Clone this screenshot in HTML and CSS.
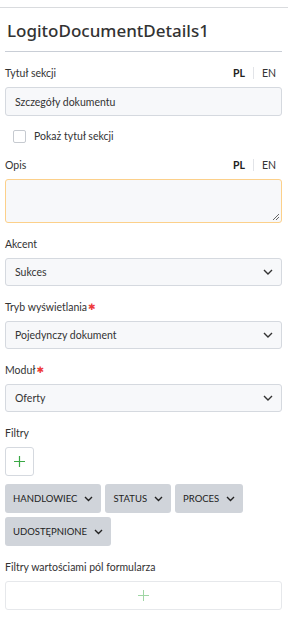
FILE: index.html
```html
<!DOCTYPE html>
<html lang="pl">
<head>
<meta charset="utf-8">
<link rel="stylesheet" href="styles.css">
</head>
<body>
<div class="topline"></div>
<div class="panel">
  <h1 class="title">LogitoDocumentDetails1</h1>
  <div class="field">
    <div class="label-row"><span class="label">Tytuł sekcji</span><span class="langs"><b>PL</b><i class="sep"></i><span>EN</span></span></div>
    <div class="input">Szczegóły dokumentu</div>
  </div>
  <label class="check"><span class="box"></span>Pokaż tytuł sekcji</label>
  <div class="field">
    <div class="label-row"><span class="label">Opis</span><span class="langs"><b>PL</b><i class="sep"></i><span>EN</span></span></div>
    <div class="textarea"><svg class="grip" width="8" height="8" viewBox="0 0 8 8"><path d="M7 1 L1 7 M7 4 L4 7" stroke="#555" stroke-width="0.9"/></svg></div>
  </div>
  <div class="field">
    <div class="label-row"><span class="label">Akcent</span></div>
    <div class="input select">Sukces<svg class="chev" width="10" height="6" viewBox="0 0 10 6"><path d="M1 1 L5 5 L9 1" fill="none" stroke="#333" stroke-width="1.4"/></svg></div>
  </div>
  <div class="field">
    <div class="label-row"><span class="label">Tryb wyświetlania<span class="req">✱</span></span></div>
    <div class="input select">Pojedynczy dokument<svg class="chev" width="10" height="6" viewBox="0 0 10 6"><path d="M1 1 L5 5 L9 1" fill="none" stroke="#333" stroke-width="1.4"/></svg></div>
  </div>
  <div class="field">
    <div class="label-row"><span class="label">Moduł<span class="req">✱</span></span></div>
    <div class="input select">Oferty<svg class="chev" width="10" height="6" viewBox="0 0 10 6"><path d="M1 1 L5 5 L9 1" fill="none" stroke="#333" stroke-width="1.4"/></svg></div>
  </div>
  <div class="field">
    <div class="label-row"><span class="label">Filtry</span></div>
    <div class="addbtn"><svg width="11" height="11" viewBox="0 0 11 11"><path d="M5.5 0 V11 M0 5.5 H11" stroke="#3aa845" stroke-width="1.2"/></svg></div>
    <div class="chips">
      <span class="chip">HANDLOWIEC<svg class="chev" width="9" height="6" viewBox="0 0 9 6"><path d="M1 1 L4.5 4.5 L8 1" fill="none" stroke="#222" stroke-width="1.4"/></svg></span>
      <span class="chip">STATUS<svg class="chev" width="9" height="6" viewBox="0 0 9 6"><path d="M1 1 L4.5 4.5 L8 1" fill="none" stroke="#222" stroke-width="1.4"/></svg></span>
      <span class="chip">PROCES<svg class="chev" width="9" height="6" viewBox="0 0 9 6"><path d="M1 1 L4.5 4.5 L8 1" fill="none" stroke="#222" stroke-width="1.4"/></svg></span>
      <span class="chip">UDOSTĘPNIONE<svg class="chev" width="9" height="6" viewBox="0 0 9 6"><path d="M1 1 L4.5 4.5 L8 1" fill="none" stroke="#222" stroke-width="1.4"/></svg></span>
    </div>
  </div>
  <div class="field">
    <div class="label-row"><span class="label">Filtry wartościami pól formularza</span></div>
    <div class="addwide"><svg width="11" height="11" viewBox="0 0 11 11"><path d="M5.5 0 V11 M0 5.5 H11" stroke="#9fd6a4" stroke-width="1"/></svg></div>
  </div>
</div>
</body>
</html>
```
FILE: styles.css
```css
* { box-sizing: border-box; }
body {
  margin: 0;
  background: #fff;
  font-family: Lato, "Noto Sans", sans-serif;
  color: #333;
  font-size: 10.5px;
}
.topline {
  margin-top: 7px;
  width: 288px;
  border-top: 1px solid #d9dbde;
}
.panel {
  width: 277px;
  margin-left: 5px;
}
.title {
  margin: 0;
  padding: 11px 0 8px 2px;
  font-family: "Noto Sans", sans-serif;
  font-size: 17px;
  font-weight: 500;
  line-height: 24px;
  color: #333;
  border-bottom: 1px solid #c9ced6;
}
.field { margin-top: 13px; }
.label-row {
  display: flex;
  justify-content: space-between;
  align-items: center;
  height: 16px;
  margin-bottom: 6px;
}
.label { color: #333; display: inline-flex; align-items: center; }
.req {
  color: #ee3b3b;
  font-family: "DejaVu Sans", sans-serif;
  font-size: 9px;
  font-weight: bold;
  margin-left: 1px;
}
.langs {
  display: flex;
  align-items: center;
  font-size: 10.5px;
  margin-right: 6px;
}
.langs b { font-weight: 700; color: #222; }
.langs span { color: #333; }
.sep {
  display: inline-block;
  width: 1px;
  height: 12px;
  background: #e2e4e8;
  margin: 0 8px;
}
.input, .textarea {
  background: #f7f8fa;
  border: 1px solid #d5d9df;
  border-radius: 3px;
}
.input {
  height: 29px;
  display: flex;
  align-items: center;
  padding: 0 9px;
  color: #333;
}
.select {
  justify-content: space-between;
  height: 28px;
  padding-right: 8px;
}
.textarea {
  height: 44px;
  border-color: #fcd08a;
  position: relative;
}
.grip { position: absolute; right: 1px; bottom: 1px; }
.check {
  display: flex;
  align-items: center;
  margin: 12px 0 0 8px;
  height: 16px;
}
.box {
  width: 13px;
  height: 13px;
  border: 1px solid #c6cad0;
  border-radius: 2px;
  background: #fff;
  margin-right: 8px;
}
.addbtn {
  width: 29px;
  height: 29px;
  border: 1px solid #d5d9df;
  border-radius: 3px;
  display: flex;
  align-items: center;
  justify-content: center;
}
.chips {
  display: flex;
  flex-wrap: wrap;
  gap: 4px;
  margin-top: 8px;
}
.chip {
  display: inline-flex;
  align-items: center;
  height: 29px;
  padding: 0 8px;
  background: #d0d4da;
  border-radius: 3px;
  font-size: 9.5px;
  color: #222;
}
.chip .chev { margin-left: 7px; }
.addwide {
  height: 29px;
  border: 1px solid #e6e8eb;
  border-radius: 3px;
  display: flex;
  align-items: center;
  justify-content: center;
}
```
